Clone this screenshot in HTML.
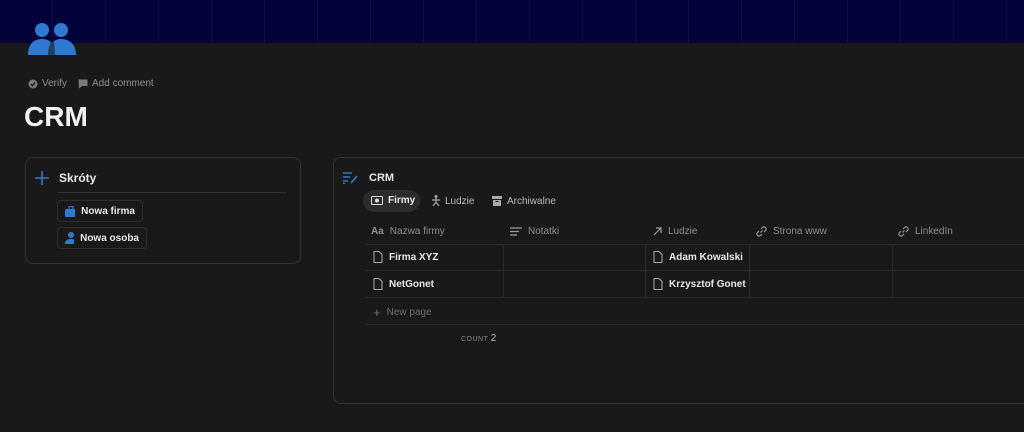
<!DOCTYPE html>
<html><head><meta charset="utf-8"><style>
*{box-sizing:border-box;margin:0;padding:0}
body{width:1024px;height:432px;overflow:hidden;background:#191919;font-family:"Liberation Sans",sans-serif;color:#d4d4d4;position:relative}
.banner{position:absolute;left:0;top:0;width:1024px;height:43px;background:#02023a;
background-image:repeating-linear-gradient(90deg,transparent 0 52px,rgba(120,120,200,.1) 52px 53px)}
.abs{position:absolute;white-space:nowrap}
.card{position:absolute;border:1px solid #333;border-radius:8px}
.t{font-size:10px;color:#8f8f8f}
.b{font-weight:bold;color:#e8e8e8}
.btn{position:absolute;border:1px solid #2f2f2f;border-radius:4px;height:22px;font-size:10px;font-weight:bold;color:#e8e8e8;display:flex;align-items:center;padding:0 7px;gap:6px;white-space:nowrap}
.hl{position:absolute;height:1px;background:#2c2c2c}
.vl{position:absolute;width:1px;background:#2c2c2c}
.cell{position:absolute;font-size:10px;display:flex;align-items:center;gap:6px;white-space:nowrap}
</style></head><body>
<div class="banner"></div>
<svg class="abs" style="left:28px;top:22px" width="48" height="33" viewBox="0 0 48 33">
<circle cx="14" cy="8" r="7" fill="#2f7ad1"/><circle cx="33" cy="8" r="7" fill="#2f7ad1"/>
<path d="M0 33 C0 22 6 17 14 17 C22 17 27 22 27 33Z" fill="#2f7ad1"/>
<path d="M20 33 C20 22 26 17 33 17 C41 17 48 22 48 33Z" fill="#2f7ad1"/>
<path d="M20 33 C20 24 23 19 26 18 L27 33Z" fill="#191919" opacity=".6"/>
</svg>
<div class="abs t" style="left:28px;top:78px;display:flex;align-items:center;gap:4px;font-size:10px">
<svg width="10" height="10"><circle cx="5" cy="5" r="4.5" fill="#7a7a7a"/><path d="M2.8 5l1.7 1.7 2.7-3.4" stroke="#191919" stroke-width="1.3" fill="none"/></svg>Verify
<svg width="10" height="10" style="margin-left:7px"><path d="M0.5 0.5h9v6.5H4L1 9.5z" fill="#7a7a7a"/></svg>Add comment</div>
<div class="abs" style="left:24px;top:101px;font-size:28px;font-weight:bold;color:#f0f0f0">CRM</div>

<div class="card" style="left:25px;top:157px;width:276px;height:107px"></div>
<svg class="abs" style="left:35px;top:171px" width="14" height="14"><path d="M7 0v14M0 7h14" stroke="#2f7ad1" stroke-width="1.6"/></svg>
<div class="abs b" style="left:59px;top:171px;font-size:12px">Skróty</div>
<div class="hl" style="left:57px;top:192px;width:229px;background:#333"></div>
<div class="btn" style="left:57px;top:200px;width:86px"><svg width="12" height="11"><rect x="0" y="3" width="12" height="8" rx="1.5" fill="#2f7ad1"/><rect x="4" y="0.5" width="4" height="3" fill="none" stroke="#2f7ad1" stroke-width="1.2"/></svg>Nowa firma</div>
<div class="btn" style="left:57px;top:227px;width:90px"><svg width="12" height="12"><circle cx="6" cy="3" r="3" fill="#2f7ad1"/><path d="M0 12c0-4 3-5 6-5s6 1 6 5z" fill="#2f7ad1"/></svg>Nowa osoba</div>

<div class="card" style="left:333px;top:157px;width:720px;height:247px"></div>
<svg class="abs" style="left:343px;top:172px" width="15" height="12"><path d="M0 1h9M0 5h7M0 9h5M0 11.5h2" stroke="#2f7ad1" stroke-width="1.4"/><path d="M8 11l6-7" stroke="#2f7ad1" stroke-width="1.6"/></svg>
<div class="abs b" style="left:369px;top:172px;font-size:11px">CRM</div>
<div class="abs" style="left:363px;top:190px;width:57px;height:22px;border-radius:11px;background:#2c2c2c"></div>
<div class="abs b" style="left:371px;top:195px;font-size:10px;display:flex;gap:5px;align-items:center"><svg width="12" height="9"><rect x="0.5" y="0.5" width="11" height="8" rx="1" fill="none" stroke="#ddd"/><circle cx="6" cy="4.5" r="2" fill="#ddd"/></svg>Firmy</div>
<svg class="abs" style="left:431px;top:195px" width="10" height="11"><circle cx="5" cy="1.5" r="1.5" fill="#aaa"/><path d="M1 5h8M5 3v4M5 7l-3 4M5 7l3 4" stroke="#aaa" stroke-width="1.2" fill="none"/></svg>
<div class="abs t" style="left:445px;top:196px;font-size:10px;color:#bbb">Ludzie</div>
<svg class="abs" style="left:492px;top:196px" width="10" height="10"><rect x="0" y="0" width="10" height="3" fill="#aaa"/><rect x="1" y="4" width="8" height="6" fill="#aaa"/><rect x="3.5" y="5" width="3" height="1" fill="#191919"/></svg>
<div class="abs t" style="left:507px;top:196px;font-size:10px;color:#bbb">Archiwalne</div>

<div class="cell t" style="left:371px;top:226px"><span style="font-weight:bold">Aa</span>Nazwa firmy</div>
<div class="cell t" style="left:510px;top:226px"><svg width="12" height="9"><path d="M0 1h12M0 4.5h9M0 8h7" stroke="#9b9b9b" stroke-width="1.2"/></svg>Notatki</div>
<div class="cell t" style="left:653px;top:226px"><svg width="9" height="9"><path d="M1 8L8 1M3 1h5v5" stroke="#9b9b9b" stroke-width="1.2" fill="none"/></svg>Ludzie</div>
<div class="cell t" style="left:756px;top:226px"><svg width="11" height="11"><path d="M4.5 6.5l2-2M5 3l1.5-1.5a2 2 0 013 3L8 6M6 8l-1.5 1.5a2 2 0 01-3-3L3 5" stroke="#9b9b9b" stroke-width="1.2" fill="none"/></svg>Strona www</div>
<div class="cell t" style="left:898px;top:226px"><svg width="11" height="11"><path d="M4.5 6.5l2-2M5 3l1.5-1.5a2 2 0 013 3L8 6M6 8l-1.5 1.5a2 2 0 01-3-3L3 5" stroke="#9b9b9b" stroke-width="1.2" fill="none"/></svg>LinkedIn</div>

<div class="hl" style="left:366px;top:244px;width:660px"></div>
<div class="hl" style="left:366px;top:270px;width:660px"></div>
<div class="hl" style="left:366px;top:297px;width:660px"></div>
<div class="hl" style="left:366px;top:324px;width:660px"></div>
<div class="vl" style="left:503px;top:244px;height:53px"></div>
<div class="vl" style="left:645px;top:244px;height:53px"></div>
<div class="vl" style="left:749px;top:244px;height:53px"></div>
<div class="vl" style="left:892px;top:244px;height:53px"></div>

<svg width="0" height="0" style="position:absolute"><defs><symbol id="doc" viewBox="0 0 10 12"><path d="M1 .5h5l3 3v8H1z" fill="none" stroke="#aaa"/></symbol></defs></svg>
<div class="cell b" style="left:373px;top:251px"><svg width="10" height="12"><use href="#doc"/></svg>Firma XYZ</div>
<div class="cell b" style="left:373px;top:278px"><svg width="10" height="12"><use href="#doc"/></svg>NetGonet</div>
<div class="cell b" style="left:653px;top:251px"><svg width="10" height="12"><use href="#doc"/></svg>Adam Kowalski</div>
<div class="cell b" style="left:653px;top:278px"><svg width="10" height="12"><use href="#doc"/></svg>Krzysztof Gonet</div>
<div class="cell t" style="left:373px;top:305px;color:#6f6f6f"><span style="font-size:13px">+</span>New page</div>
<div class="abs" style="left:461px;top:333px;font-size:7px;color:#8a8a8a;letter-spacing:.5px">COUNT <span style="font-size:10px;color:#bbb;letter-spacing:0">2</span></div>
</body></html>
